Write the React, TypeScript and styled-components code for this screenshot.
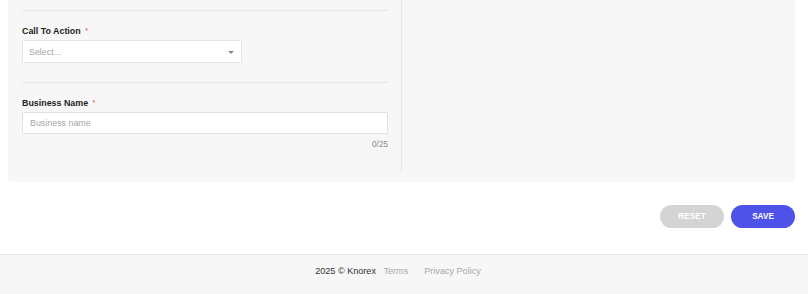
import React from "react";
import styled, { createGlobalStyle } from "styled-components";

const GlobalStyle = createGlobalStyle`
  html, body {
    margin: 0;
    padding: 0;
    background: #ffffff;
    font-family: "Liberation Sans", Arial, Helvetica, sans-serif;
  }
  * { box-sizing: border-box; }
`;

const Page = styled.div`
  display: flex;
  flex-direction: column;
  width: 808px;
`;

const Panel = styled.section`
  display: grid;
  grid-template-columns: 394px 1fr;
  margin: 0 13px 0 8px;
  padding-bottom: 10px;
  background: #f7f7f7;
  border-radius: 0 0 4px 4px;
`;

const LeftColumn = styled.div`
  display: flex;
  flex-direction: column;
  padding: 10px 13px 21px 14px;
  border-right: 1px solid #e6e6e6;
`;

const RightColumn = styled.div``;

const Divider = styled.hr<{ $gapTop?: number }>`
  margin: ${(p) => p.$gapTop ?? 0}px 0 0 0;
  border: none;
  height: 1px;
  background: #e6e6e6;
`;

const Field = styled.div`
  display: flex;
  flex-direction: column;
  margin-top: 14px;
`;

const Label = styled.label`
  display: flex;
  align-items: center;
  font-size: 8.9px;
  line-height: 12px;
  font-weight: 700;
  color: #1e1e1e;
`;

const Required = styled.span`
  color: #e5413b;
  font-size: 7px;
  font-weight: 400;
  margin-left: 4.5px;
  line-height: 12px;
`;

const SelectBox = styled.div<{ $width: number }>`
  display: flex;
  align-items: center;
  justify-content: space-between;
  width: ${(p) => p.$width}px;
  height: 23px;
  margin-top: 3px;
  padding: 0 7px 0 6px;
  background: #ffffff;
  border: 1px solid #e4e4e4;
  border-radius: 1px;
  font-size: 8.9px;
  color: #a6a6a6;
`;

const Caret = styled.span`
  width: 0;
  height: 0;
  border-left: 3px solid transparent;
  border-right: 3px solid transparent;
  border-top: 3.5px solid #888888;
  margin-top: 1px;
`;

const TextInput = styled.input`
  width: 100%;
  height: 22px;
  margin-top: 3px;
  padding: 0 7px;
  background: #ffffff;
  border: 1px solid #e0e0ea;
  border-radius: 1px;
  outline: none;
  font-family: "Liberation Sans", Arial, sans-serif;
  font-size: 8.9px;
  color: #333333;
  &::placeholder {
    color: #a6a6a6;
  }
`;

const Counter = styled.div`
  margin-top: 5px;
  text-align: right;
  font-size: 8.2px;
  line-height: 12px;
  color: #8a8a8a;
`;

const Actions = styled.div`
  display: flex;
  justify-content: flex-end;
  gap: 7px;
  padding: 23px 13px 26px 0;
`;

const Button = styled.button<{ $variant: "reset" | "save" }>`
  width: 64px;
  height: 23px;
  border: none;
  border-radius: 12px;
  background: ${(p) => (p.$variant === "save" ? "#4f52e8" : "#d4d4d4")};
  color: #ffffff;
  font-family: "Liberation Sans", Arial, sans-serif;
  font-size: 8.2px;
  font-weight: 700;
  padding: 0;
  cursor: pointer;
`;

const Footer = styled.footer`
  display: flex;
  justify-content: center;
  height: 40px;
  padding: 10px 12px 0 0;
  background: #f7f7f7;
  border-top: 1px solid #e6e6e6;
  font-size: 9.1px;
  line-height: 13px;
`;

const Copyright = styled.span`
  color: #333333;
  margin-right: 7.5px;
`;

const FooterLink = styled.a`
  color: #a8a8a8;
  text-decoration: none;
  & + & {
    margin-left: 16px;
  }
`;

export default function App() {
  return (
    <>
      <GlobalStyle />
      <Page>
        <Panel>
          <LeftColumn>
            <Divider />
            <Field>
              <Label>
                Call To Action<Required>*</Required>
              </Label>
              <SelectBox $width={220}>
                <span>Select...</span>
                <Caret />
              </SelectBox>
            </Field>
            <Divider $gapTop={19} />
            <Field>
              <Label>
                Business Name<Required>*</Required>
              </Label>
              <TextInput placeholder="Business name" />
              <Counter>0/25</Counter>
            </Field>
          </LeftColumn>
          <RightColumn />
        </Panel>
        <Actions>
          <Button $variant="reset">RESET</Button>
          <Button $variant="save">SAVE</Button>
        </Actions>
        <Footer>
          <Copyright>2025 © Knorex</Copyright>
          <FooterLink href="#">Terms</FooterLink>
          <FooterLink href="#">Privacy Policy</FooterLink>
        </Footer>
      </Page>
    </>
  );
}
